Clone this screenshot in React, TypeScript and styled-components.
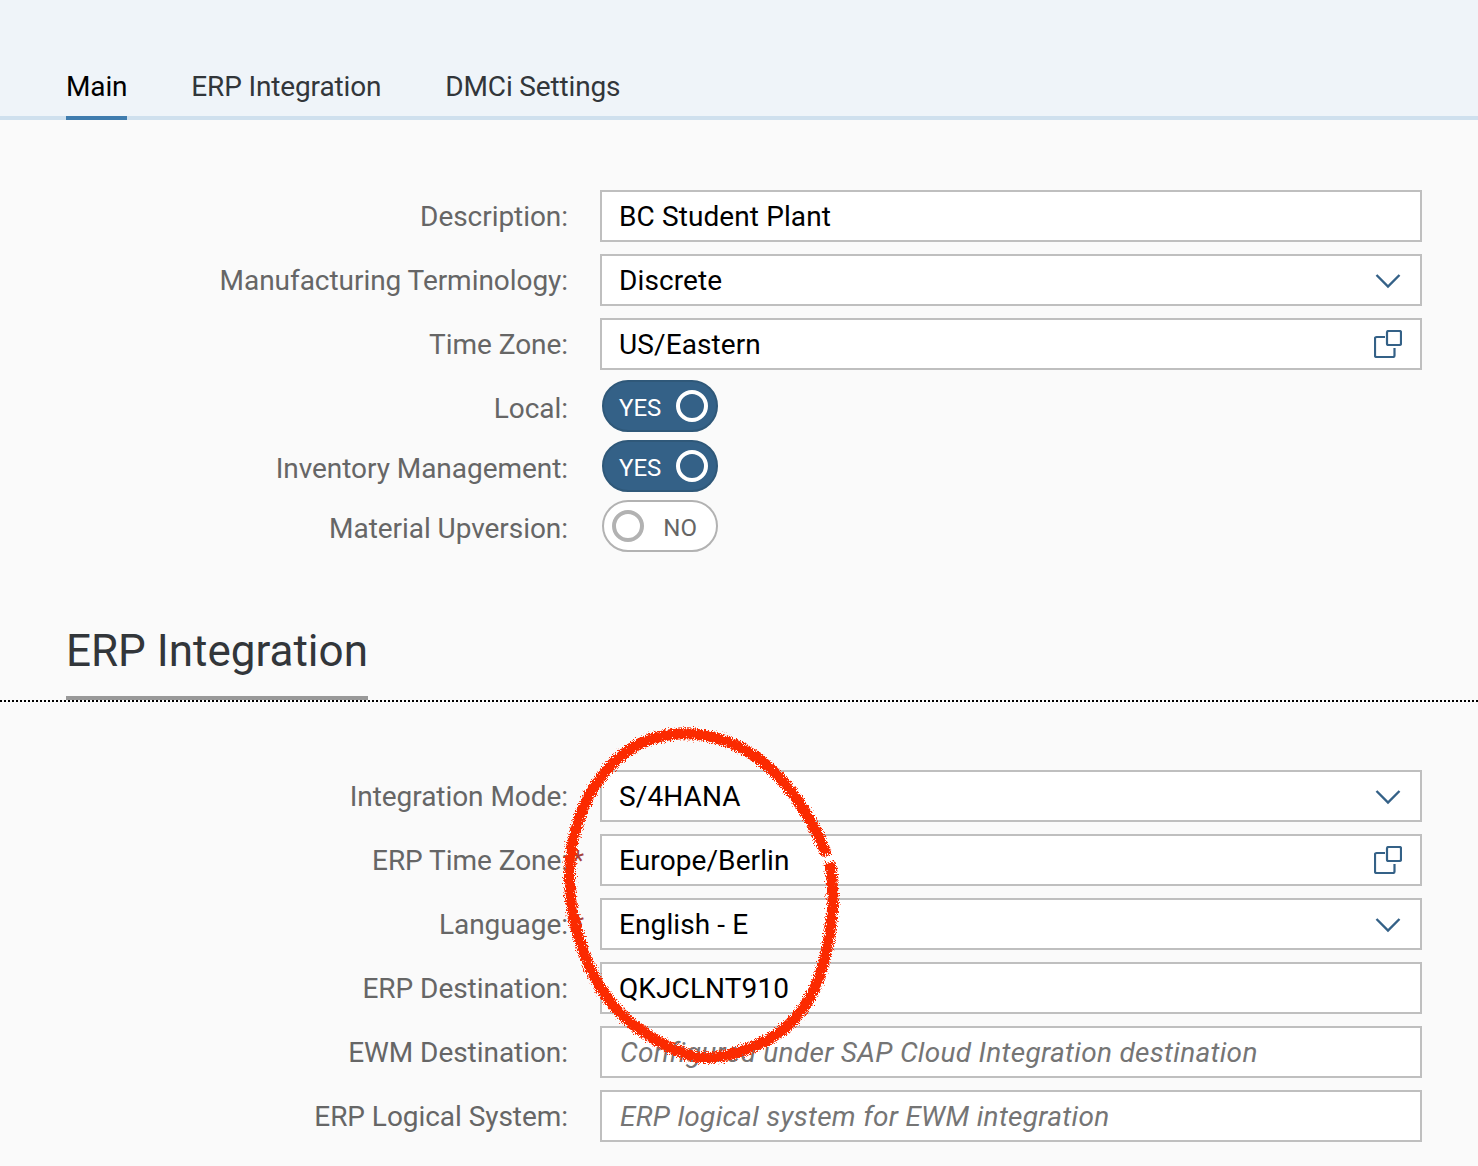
import React from "react";
import styled, { createGlobalStyle } from "styled-components";

const GlobalStyle = createGlobalStyle`
    html, body {
        margin: 0;
        padding: 0;
        background: #fafafa;
    }
    body {
        font-family: Roboto, "Noto Sans", sans-serif;
    }
`;

const Page = styled.div`
    position: relative;
    width: 1478px;
    height: 1166px;
    overflow: hidden;
    background: #fafafa;
`;

const TabBar = styled.div`
    height: 116px;
    box-sizing: content-box;
    background: #eff4f9;
    border-bottom: 4px solid #cfe0ee;
    display: flex;
    align-items: flex-end;
    gap: 64px;
    padding-left: 66px;
`;

const Tab = styled.div<{ $active?: boolean }>`
    position: relative;
    height: 60px;
    line-height: 62px;
    font-size: 28px;
    letter-spacing: -0.15px;
    color: ${({ $active }) => ($active ? "#000" : "#32363a")};
    &::after {
        content: "";
        display: ${({ $active }) => ($active ? "block" : "none")};
        position: absolute;
        left: 0;
        right: 0;
        bottom: -4px;
        height: 4px;
        background: #3f7cae;
    }
`;

const Form = styled.div<{ $top: number }>`
    padding: ${({ $top }) => $top}px 56px 0 0;
    display: flex;
    flex-direction: column;
`;

const Row = styled.div<{ $gap: number }>`
    display: grid;
    grid-template-columns: 568px 1fr;
    column-gap: 32px;
    align-items: center;
    height: 52px;
    margin-bottom: ${({ $gap }) => $gap}px;
`;

const Label = styled.label<{ $shift: number }>`
    position: relative;
    text-align: right;
    font-size: 28px;
    line-height: 34px;
    padding-top: ${({ $shift }) => $shift}px;
    letter-spacing: -0.05px;
    color: #666;
`;

const Asterisk = styled.span`
    position: absolute;
    left: 572px;
    top: 2px;
    color: #a5423f;
    font-size: 28px;
`;

const Field = styled.div`
    box-sizing: border-box;
    height: 52px;
    background: #fff;
    border: 2px solid #bfbfbf;
    display: flex;
    align-items: center;
    justify-content: space-between;
    padding: 0 19px 0 17px;
`;

const Value = styled.span<{ $placeholder?: boolean }>`
    font-size: 28px;
    line-height: 34px;
    padding-top: 2px;
    color: ${({ $placeholder }) => ($placeholder ? "#757575" : "#000")};
    font-style: ${({ $placeholder }) => ($placeholder ? "italic" : "normal")};
    letter-spacing: ${({ $placeholder }) => ($placeholder ? "0.3px" : "0.1px")};
    margin-left: ${({ $placeholder }) => ($placeholder ? "1px" : "0")};
`;

const Toggle = styled.div<{ $on?: boolean }>`
    box-sizing: border-box;
    width: 116px;
    height: 52px;
    margin-left: 2px;
    border-radius: 26px;
    display: flex;
    flex-direction: ${({ $on }) => ($on ? "row" : "row-reverse")};
    align-items: center;
    justify-content: space-between;
    padding: ${({ $on }) => ($on ? "0 8px 0 15px" : "0 19px 0 8px")};
    background: ${({ $on }) => ($on ? "#346187" : "#fff")};
    border: 2px solid ${({ $on }) => ($on ? "#2f5879" : "#b2b2b2")};
    color: ${({ $on }) => ($on ? "#fff" : "#666")};
    font-size: 24px;
`;

const ToggleText = styled.span`
    padding-top: 4px;
`;

const Knob = styled.span<{ $on?: boolean }>`
    box-sizing: border-box;
    width: 32px;
    height: 32px;
    border-radius: 50%;
    border: 4px solid ${({ $on }) => ($on ? "#fff" : "#b2b2b2")};
`;

const SectionHeader = styled.div`
    margin-top: 44px;
    height: 96px;
    border-bottom: 2px dotted #000;
    padding-left: 66px;
    display: flex;
`;

const SectionTitle = styled.h2`
    margin: 0;
    height: 70px;
    padding-top: 22px;
    box-sizing: content-box;
    border-bottom: 4px solid #999;
    font-size: 44px;
    font-weight: 400;
    line-height: 50px;
    color: #32363a;
`;

const Scribble = styled.svg`
    position: absolute;
    left: 540px;
    top: 710px;
    pointer-events: none;
`;

const ChevronIcon = styled.svg`
    margin-top: 2px;
`;

const HelpIcon = styled.svg`
    margin-right: -1px;
`;

const Chevron = () => (
    <ChevronIcon width="26" height="16" viewBox="0 0 26 16" fill="none">
        <path d="M1.5 2 L13 13.5 L24.5 2" stroke="#346187" strokeWidth="2.4" />
    </ChevronIcon>
);

const ValueHelp = () => (
    <HelpIcon width="28" height="28" viewBox="0 0 28 28" fill="none" stroke="#346187" strokeWidth="2.2" strokeLinejoin="round">
        <path d="M11 7 H2.5 a1.5 1.5 0 0 0 -1.5 1.5 V25.5 a1.5 1.5 0 0 0 1.5 1.5 H19 a1.5 1.5 0 0 0 1.5 -1.5 V18" />
        <rect x="13" y="1" width="14" height="14" rx="1.5" />
    </HelpIcon>
);

// hand drawn ring, smoothed through the midpoints
const ring = [
    [287, 145], [273, 112], [240, 65], [200, 35], [160, 23], [117, 25], [83, 42],
    [53, 75], [33, 122], [28, 172], [35, 219], [54, 270], [83, 309], [126, 337],
    [168, 352], [232, 331], [266, 298], [284, 257], [293, 203], [293, 178], [290, 152],
];
const ringPath = ring.reduce((d, [x, y], i) => {
    if (i === 0) return `M${x} ${y}`;
    if (i === ring.length - 1) return `${d} L${x} ${y}`;
    const [nx, ny] = ring[i + 1];
    return `${d} Q${x} ${y} ${(x + nx) / 2} ${(y + ny) / 2}`;
}, "");

type FieldRow = {
    label: string;
    value: string;
    icon?: "chevron" | "help";
    placeholder?: boolean;
    required?: boolean;
};

const mainFields: FieldRow[] = [
    { label: "Description:", value: "BC Student Plant" },
    { label: "Manufacturing Terminology:", value: "Discrete", icon: "chevron" },
    { label: "Time Zone:", value: "US/Eastern", icon: "help" },
];

const mainToggles = [
    { label: "Local:", on: true },
    { label: "Inventory Management:", on: true },
    { label: "Material Upversion:", on: false },
];

const erpFields: FieldRow[] = [
    { label: "Integration Mode:", value: "S/4HANA", icon: "chevron" },
    { label: "ERP Time Zone:", value: "Europe/Berlin", icon: "help", required: true },
    { label: "Language:", value: "English - E", icon: "chevron", required: true },
    { label: "ERP Destination:", value: "QKJCLNT910" },
    { label: "EWM Destination:", value: "Configured under SAP Cloud Integration destination", placeholder: true },
    { label: "ERP Logical System:", value: "ERP logical system for EWM integration", placeholder: true },
];

const renderField = (f: FieldRow, i: number, all: FieldRow[]) => (
    <Row key={f.label} $gap={all === mainFields && i === all.length - 1 ? 10 : 12}>
        <Label $shift={2}>
            {f.label}
            {f.required && <Asterisk>*</Asterisk>}
        </Label>
        <Field>
            <Value $placeholder={f.placeholder}>{f.value}</Value>
            {f.icon === "chevron" && <Chevron />}
            {f.icon === "help" && <ValueHelp />}
        </Field>
    </Row>
);

export default function App() {
    return (
        <Page>
            <GlobalStyle />
            <TabBar>
                <Tab $active>Main</Tab>
                <Tab>ERP Integration</Tab>
                <Tab>DMCi Settings</Tab>
            </TabBar>
            <Form $top={70}>
                {mainFields.map(renderField)}
                {mainToggles.map((t) => (
                    <Row key={t.label} $gap={8}>
                        <Label $shift={6}>{t.label}</Label>
                        <Toggle $on={t.on}>
                            <ToggleText>{t.on ? "YES" : "NO"}</ToggleText>
                            <Knob $on={t.on} />
                        </Toggle>
                    </Row>
                ))}
            </Form>
            <SectionHeader>
                <SectionTitle>ERP Integration</SectionTitle>
            </SectionHeader>
            <Form $top={68}>{erpFields.map(renderField)}</Form>
            <Scribble width="310" height="360" viewBox="0 0 310 360" fill="none">
                <defs>
                    <filter id="rough" x="-5%" y="-5%" width="110%" height="110%">
                        <feTurbulence type="fractalNoise" baseFrequency="1.1" numOctaves="3" seed="3" />
                        <feDisplacementMap in="SourceGraphic" scale="9" xChannelSelector="R" yChannelSelector="G" />
                    </filter>
                </defs>
                <path d={ringPath} stroke="#fb2b05" strokeWidth="11" filter="url(#rough)" />
            </Scribble>
        </Page>
    );
}
